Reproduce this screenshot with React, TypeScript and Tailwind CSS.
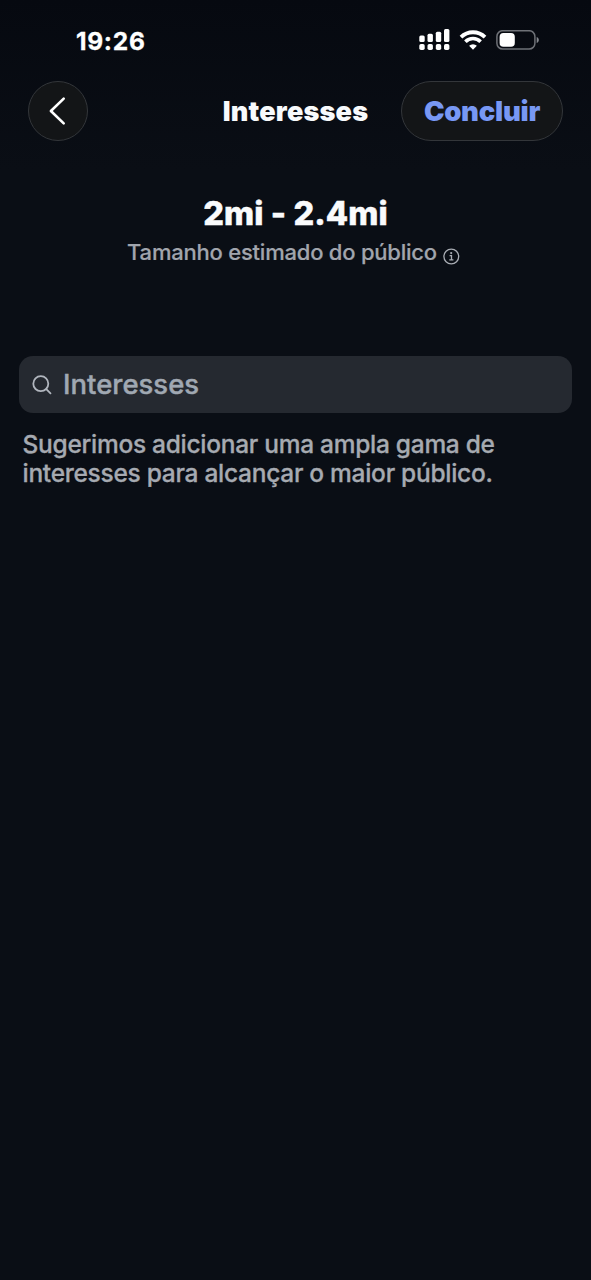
import React from "react";

function SignalIcon() {
  return (
    <svg className="h-[22px] w-[32px]" viewBox="0 0 32 22" fill="#ffffff">
      <rect x="0.3" y="6.5" width="5.4" height="6.5" rx="1.5" />
      <rect x="8.5" y="4.8" width="5.4" height="8.2" rx="1.5" />
      <rect x="16.8" y="2.8" width="5.4" height="10.2" rx="1.5" />
      <rect x="25" y="0" width="5.4" height="13" rx="1.5" />
      <rect x="0.3" y="15" width="5.4" height="6" rx="1.7" />
      <rect x="8.5" y="15" width="5.4" height="6" rx="1.7" />
      <rect x="16.8" y="15" width="5.4" height="6" rx="1.7" />
      <rect x="25" y="15" width="5.4" height="6" rx="1.7" />
    </svg>
  );
}

function WifiIcon() {
  return (
    <svg className="h-[20px] w-[28px]" viewBox="0 0 28 20" fill="none" stroke="#ffffff">
      <path d="M2 7.2a17 17 0 0 1 24 0" strokeWidth="3.8" />
      <path d="M6.4 11.7a10.7 10.7 0 0 1 15.2 0" strokeWidth="3.6" />
      <path d="M14 19.8l-3.9-4a5.5 5.5 0 0 1 7.8 0z" fill="#ffffff" stroke="none" />
    </svg>
  );
}

function BatteryIcon() {
  return (
    <svg className="h-[20px] w-[43px]" viewBox="0 0 43 20" fill="none">
      <rect x="0.9" y="0.7" width="38" height="18.4" rx="5.8" stroke="#6e7177" strokeWidth="1.5" />
      <rect x="3.6" y="3.1" width="15.2" height="13.6" rx="3.8" fill="#ffffff" />
      <path d="M40.7 7c2.8 1 2.8 4.9 0 5.9z" fill="#85888e" />
    </svg>
  );
}

function StatusBar() {
  return (
    <div className="flex h-20 items-center justify-between pr-[52px] pl-[76px] text-white">
      <span className="pt-[2px] text-[24.5px] leading-none font-bold tracking-[0.7px] [-webkit-text-stroke:0.3px_#ffffff]">
        19:26
      </span>
      <div className="flex items-center">
        <SignalIcon />
        <span className="w-[8px]" />
        <WifiIcon />
        <span className="w-[9px]" />
        <BatteryIcon />
      </div>
    </div>
  );
}

function Header() {
  return (
    <header className="grid h-[62px] grid-cols-[1fr_auto_1fr] items-center px-[28px]">
      <button
        aria-label="Voltar"
        className="flex size-[60px] items-center justify-center rounded-full border border-[#33363a] bg-[#131517]"
      >
        <svg className="mr-px h-[30px] w-[18px]" viewBox="0 0 18 30" fill="none" stroke="#ffffff" strokeWidth="2.6" strokeLinecap="round" strokeLinejoin="round">
          <path d="M14.7 2.6L1.9 15l12.8 12.4" />
        </svg>
      </button>
      <h1 className="text-[27px] leading-none font-black tracking-[0.2px] whitespace-nowrap text-[#f8fafc]">
        Interesses
      </h1>
      <button className="flex h-[60px] w-[162px] items-center justify-center justify-self-end rounded-full border border-[#33363a] bg-[#131517] pt-px text-[27.5px] leading-none font-black tracking-[-0.25px] text-[#7898f4]">
        Concluir
      </button>
    </header>
  );
}

function AudienceSize() {
  return (
    <section className="flex flex-col items-center pt-[54px]">
      <p className="text-[32.5px] leading-[36px] font-extrabold tracking-[0.1px] whitespace-nowrap text-[#fafbfc] [-webkit-text-stroke:0.5px_#fafbfc]">
        2mi - 2.4mi
      </p>
      <div className="flex h-[40px] items-center gap-[6px] pr-[4px]">
        <span className="text-[22px] leading-[30px] font-medium tracking-[-0.22px] whitespace-nowrap text-[#a1a5ad] [-webkit-text-stroke:0.2px_#a1a5ad]">
          Tamanho estimado do público
        </span>
        <svg className="mt-[9px] size-[17px]" viewBox="0 0 17 17" fill="none" stroke="#a9adb4">
          <circle cx="8.3" cy="8.5" r="7.4" strokeWidth="1.3" />
          <circle cx="8.2" cy="5.1" r="1.1" fill="#a9adb4" stroke="none" />
          <path d="M6.6 7.7h1.9v4M6.3 11.8h4.1" strokeWidth="1.3" />
        </svg>
      </div>
    </section>
  );
}

function InterestSearch() {
  return (
    <section className="px-[19px] pt-[83px]">
      <div className="mt-px flex h-[57px] items-center gap-[11px] rounded-[14px] bg-[#252930] pl-[13px]">
        <svg className="size-[20px]" viewBox="0 0 20 20" fill="none" stroke="#b1b6be" strokeWidth="1.8" strokeLinecap="round">
          <circle cx="8.8" cy="8.7" r="7.5" />
          <path d="M14.3 14.2l4.2 4.2" />
        </svg>
        <span className="pt-px text-[27.5px] leading-none font-medium whitespace-nowrap text-[#a0a8b2] [-webkit-text-stroke:0.4px_#a0a8b2]">
          Interesses
        </span>
      </div>
      <p className="pt-[17px] pl-[3.5px] text-[24.5px] leading-[29px] font-medium tracking-[-0.28px] whitespace-nowrap text-[#a6aab1] [-webkit-text-stroke:0.3px_#a6aab1]">
        Sugerimos adicionar uma ampla gama de
        <br />
        interesses para alcançar o maior público.
      </p>
    </section>
  );
}

export default function App() {
  return (
    <main className="min-h-[1280px] w-full overflow-hidden bg-[#0a0e15] bg-[linear-gradient(to_bottom,#060910_0px,#0a0e15_170px)] font-['Inter',sans-serif]">
      <StatusBar />
      <Header />
      <AudienceSize />
      <InterestSearch />
    </main>
  );
}
